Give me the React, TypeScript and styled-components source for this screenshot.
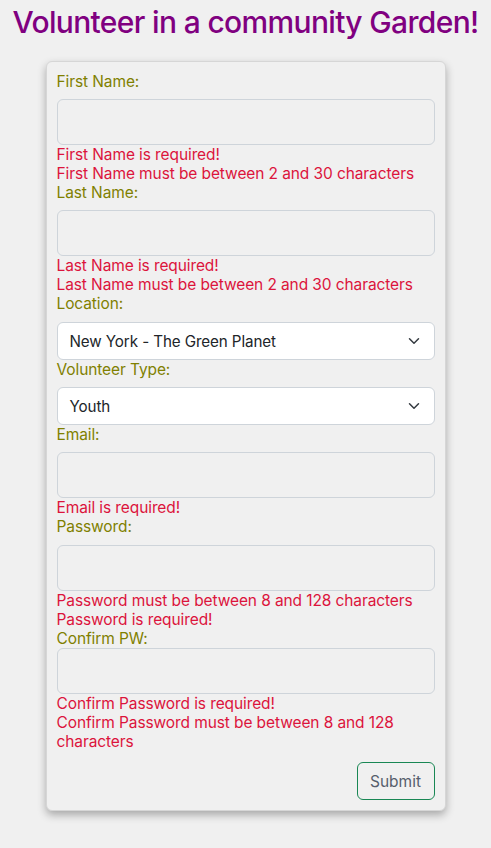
import React from "react";
import styled, { createGlobalStyle } from "styled-components";

const Global = createGlobalStyle`
  html, body { margin: 0; padding: 0; background: #f0f0f0; }
  body { font-family: Inter, "Noto Sans", sans-serif; }
  * { box-sizing: border-box; }
`;

const Page = styled.main`
  display: flex;
  flex-direction: column;
  align-items: center;
  padding-bottom: 37px;
`;

const Title = styled.h1`
  margin: 4px 0 0;
  font-size: 30px;
  line-height: 37px;
  font-weight: 500;
  color: #800080;
  letter-spacing: -0.66px;
  white-space: nowrap;
`;

const Card = styled.form`
  width: 400px;
  margin-top: 20px;
  padding: 10px;
  border: 1px solid #d6d6d6;
  border-radius: 6px;
  background: #f0f0f0;
  box-shadow: 0 4px 8px rgba(0, 0, 0, 0.3);
  display: flex;
  flex-direction: column;
  font-size: 15.5px;
  letter-spacing: -0.1px;
`;

const Label = styled.label<{ $gap?: number }>`
  display: block;
  color: #808000;
  line-height: 19px;
  margin-bottom: ${(p) => p.$gap ?? 8}px;
`;

const TextInput = styled.input`
  display: block;
  width: 100%;
  height: 46px;
  border: 1px solid #ced4da;
  border-radius: 6px;
  background: transparent;
  padding: 0 12px;
  font: inherit;
`;

const SelectBox = styled.div`
  position: relative;
  height: 38px;
  border: 1px solid #ced4da;
  border-radius: 6px;
  background: #fff;
  display: flex;
  align-items: center;
  padding: 0 12px;
  color: #212529;
  font-size: 15.2px;
`;

const Chevron = styled.svg`
  position: absolute;
  right: 14px;
  top: 50%;
  margin-top: -6px;
  width: 12px;
  height: 12px;
`;

const ErrorText = styled.div`
  color: #dc143c;
  line-height: 19px;
`;

const Actions = styled.div`
  display: flex;
  justify-content: flex-end;
  margin-top: 11px;
`;

const SubmitButton = styled.button`
  width: 78px;
  height: 38px;
  border: 1px solid #198754;
  border-radius: 6px;
  background: transparent;
  color: #575e6c;
  font: inherit;
  font-size: 15.5px;
`;

const Select = ({ value }: { value: string }) => (
  <SelectBox>
    {value}
    <Chevron viewBox="0 0 16 16">
      <path
        d="M2 5l6 6 6-6"
        fill="none"
        stroke="#343a40"
        strokeWidth="2"
        strokeLinecap="round"
        strokeLinejoin="round"
      />
    </Chevron>
  </SelectBox>
);

export default function App() {
  return (
    <>
      <Global />
      <Page>
        <Title>Volunteer in a community Garden!</Title>
        <Card onSubmit={(e) => e.preventDefault()}>
          <Label>First Name:</Label>
          <TextInput />
          <ErrorText>First Name is required!</ErrorText>
          <ErrorText>First Name must be between 2 and 30 characters</ErrorText>
          <Label>Last Name:</Label>
          <TextInput />
          <ErrorText>Last Name is required!</ErrorText>
          <ErrorText>Last Name must be between 2 and 30 characters</ErrorText>
          <Label $gap={9}>Location:</Label>
          <Select value="New York - The Green Planet" />
          <Label>Volunteer Type:</Label>
          <Select value="Youth" />
          <Label>Email:</Label>
          <TextInput />
          <ErrorText>Email is required!</ErrorText>
          <Label $gap={9}>Password:</Label>
          <TextInput type="password" />
          <ErrorText>Password must be between 8 and 128 characters</ErrorText>
          <ErrorText>Password is required!</ErrorText>
          <Label $gap={0}>Confirm PW:</Label>
          <TextInput type="password" />
          <ErrorText>Confirm Password is required!</ErrorText>
          <ErrorText>
            Confirm Password must be between 8 and 128 characters
          </ErrorText>
          <Actions>
            <SubmitButton type="submit">Submit</SubmitButton>
          </Actions>
        </Card>
      </Page>
    </>
  );
}
